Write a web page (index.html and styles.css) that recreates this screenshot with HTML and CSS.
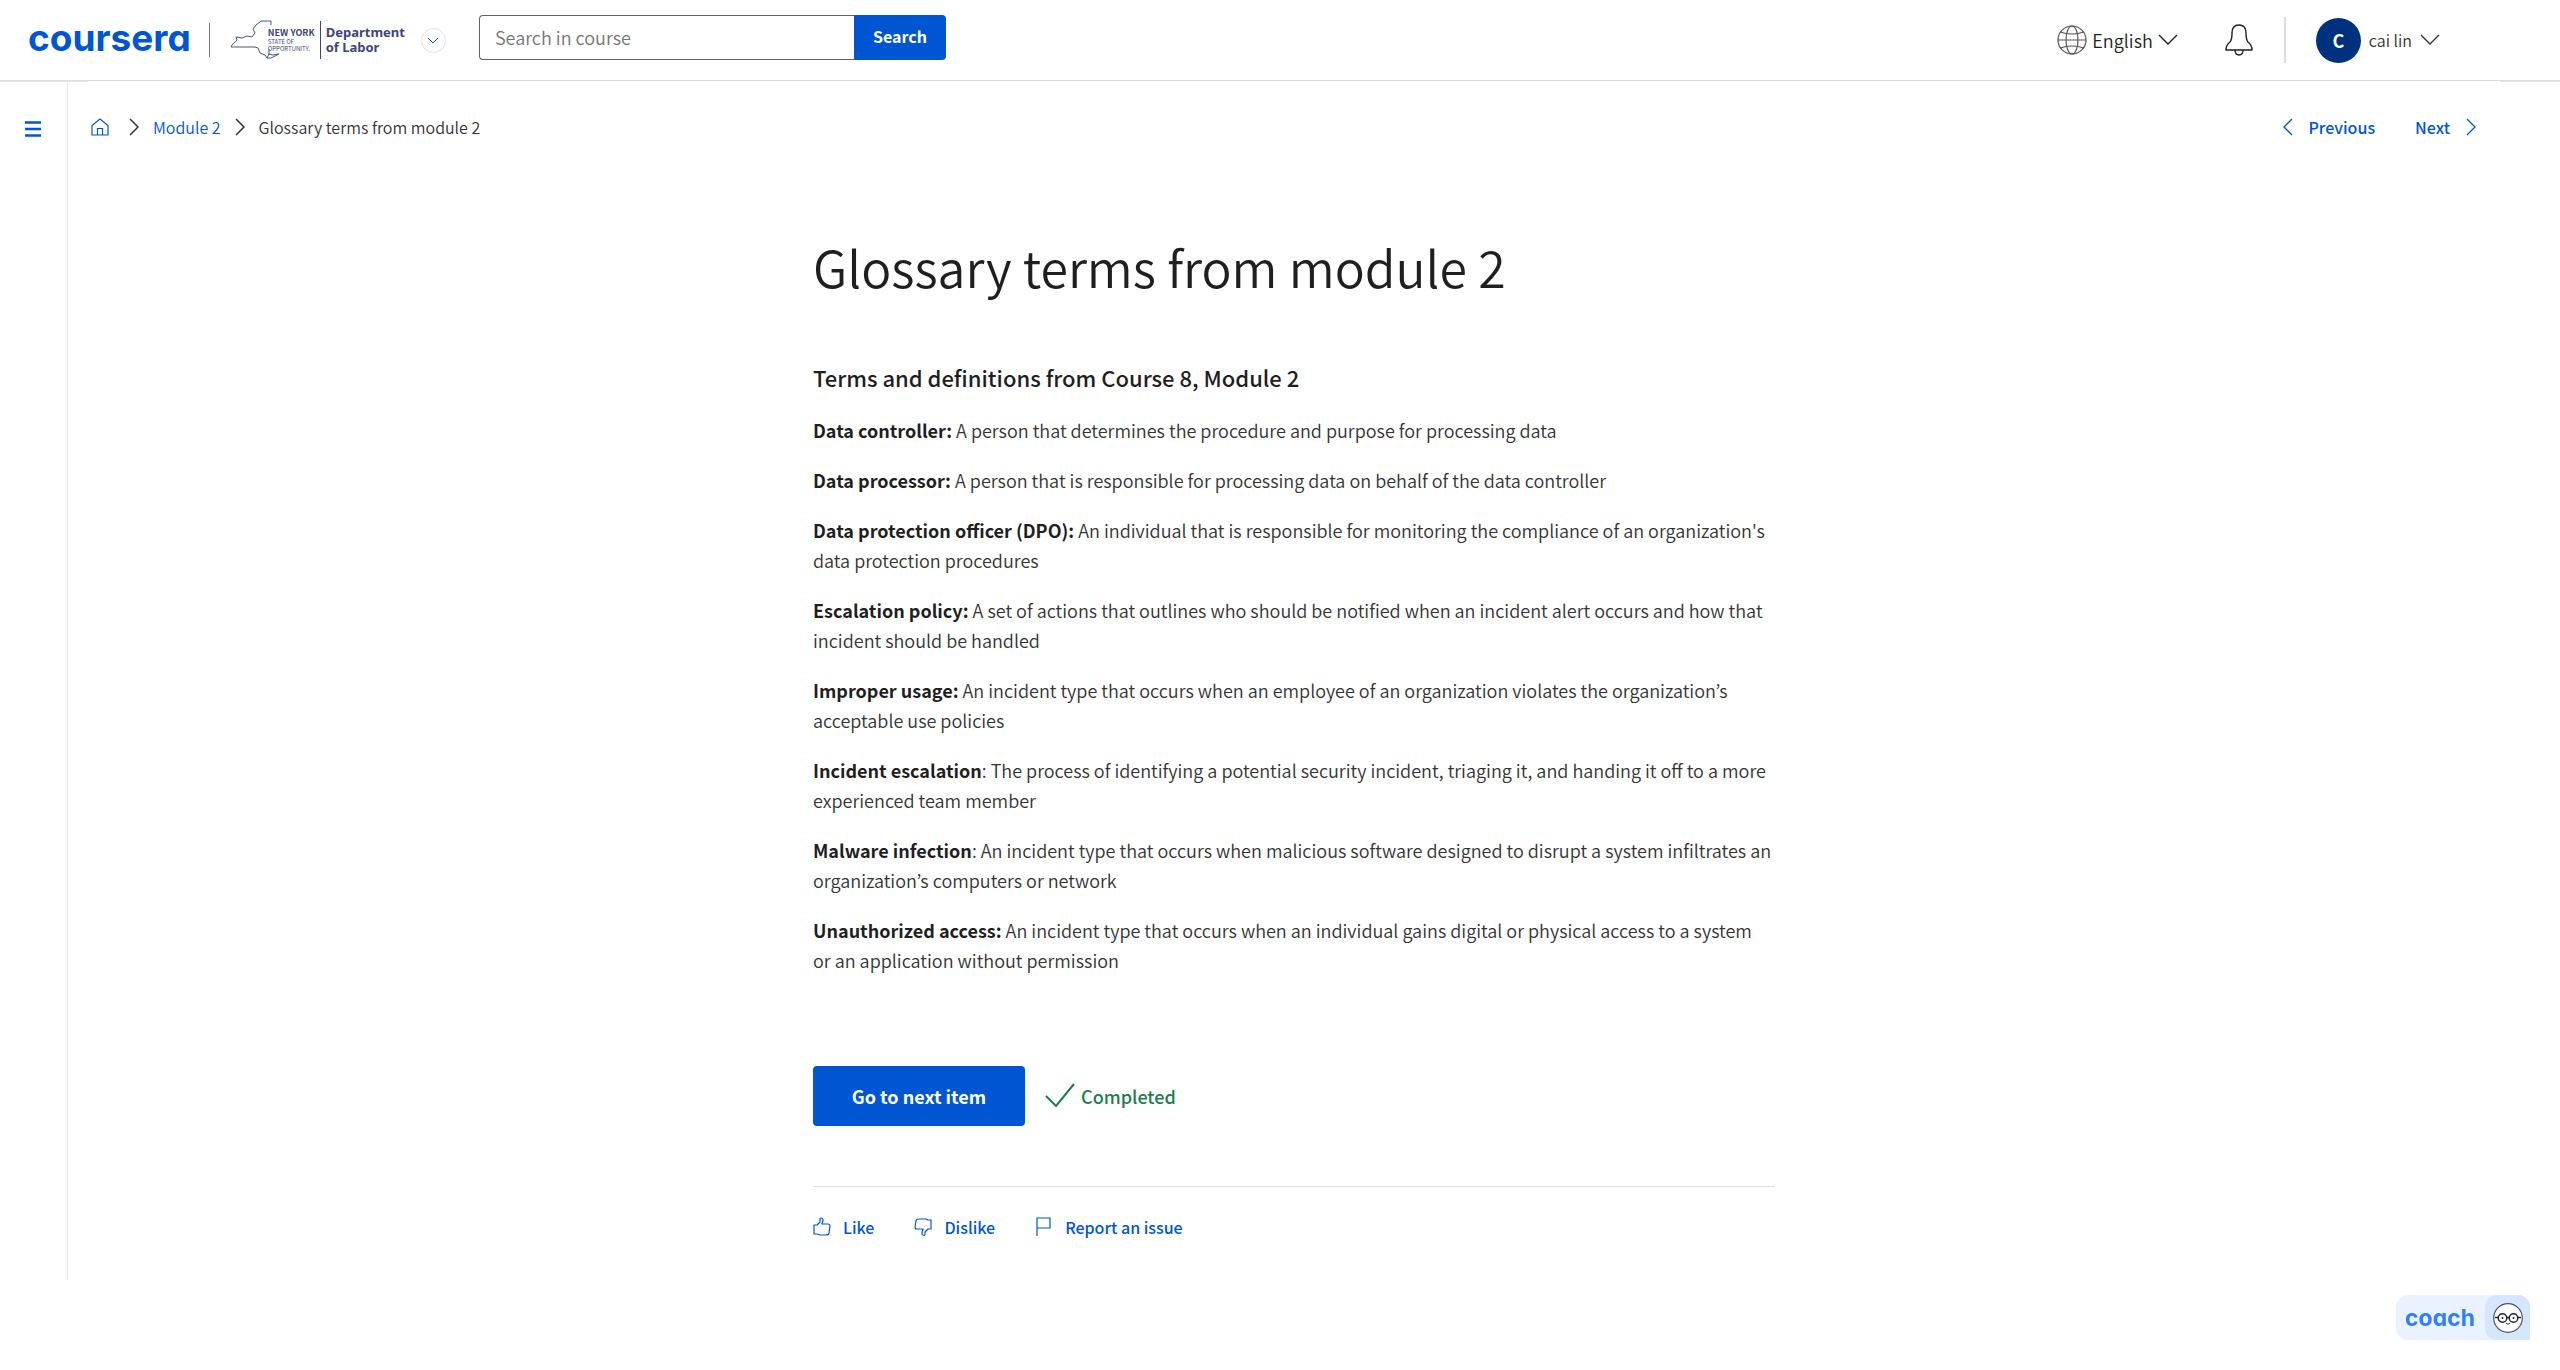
FILE: index.html
```html
<!DOCTYPE html>
<html lang="en">
<head>
<meta charset="utf-8">
<meta name="viewport" content="width=device-width, initial-scale=1">
<title>Glossary terms from module 2 | Coursera</title>
<link rel="stylesheet" href="styles.css">
</head>
<body>
<header class="topbar">
  <a class="wordmark" href="#">coursera</a>
  <span class="brand-divider"></span>
  <a class="partner" href="#">
    <svg class="partner-map" width="46" height="40" viewBox="0 0 46 40" fill="none" stroke="#4a5680" stroke-width="1">
      <path d="M41 5V1H31L26 5L23 9L25 13L22 17L17 16L12 18L6 17L7 20L2 25L1 27H25L28 28L30 33L35 35L37 38M39 29V34L37 38L41 38L49 34L43 35L38 34"/>
    </svg>
    <span class="partner-state"><b>NEW YORK</b><span>STATE OF</span><span>OPPORTUNITY.</span></span>
    <span class="partner-name">Department<br>of Labor</span>
  </a>
  <button class="partner-toggle" type="button" aria-label="Switch program">
    <svg width="12" height="7" viewBox="0 0 12 7" fill="none" stroke="currentColor"><path d="M1 1L6 6L11 1"/></svg>
  </button>
  <form class="search">
    <input class="search-input" type="text" placeholder="Search in course" aria-label="Search in course">
    <button class="search-button" type="button">Search</button>
  </form>
  <nav class="tools" aria-label="Account">
    <button class="tool language" type="button">
      <svg width="30" height="30" viewBox="0 0 30 30" fill="none" stroke="#555" stroke-width="1.2">
        <circle cx="15" cy="15" r="14"/><ellipse cx="15" cy="15" rx="6" ry="14"/><path d="M1 15H29M3 7Q15 11 27 7M3 23Q15 19 27 23"/>
      </svg>
      <span>English</span>
      <svg width="20" height="12" viewBox="0 0 20 12" fill="none" stroke="currentColor" stroke-width="1.4"><path d="M1 1L10 10L19 1"/></svg>
    </button>
    <button class="tool" type="button" aria-label="Notifications">
      <svg width="30" height="32" viewBox="0 0 30 32" fill="none" stroke="currentColor" stroke-width="1.4" stroke-linejoin="round">
        <path d="M8 9Q8 1 15 1Q22 1 22 9Q22 16 24 18Q28 21 28 26H2Q2 21 6 18Q8 16 8 9ZM11 26Q11 31 15 31Q19 31 19 26"/>
      </svg>
    </button>
    <span class="tools-divider"></span>
    <button class="tool account" type="button">
      <span class="avatar">C</span>
      <span>cai lin</span>
      <svg width="20" height="12" viewBox="0 0 20 12" fill="none" stroke="currentColor" stroke-width="1.4"><path d="M1 1L10 10L19 1"/></svg>
    </button>
  </nav>
</header>

<div class="page">
  <aside class="rail">
    <button class="menu" type="button" aria-label="Show menu">
      <svg width="16" height="16" viewBox="0 0 16 16" stroke="currentColor" stroke-width="2.500"><path d="M0 1.500H16M0 8H16M0 14.500H16"/></svg>
    </button>
  </aside>
  <main class="main">
    <div class="pathbar">
      <nav class="crumbs" aria-label="Breadcrumb">
        <a class="home" href="#" aria-label="Home">
          <svg width="18" height="18" viewBox="0 0 18 18" fill="none" stroke="currentColor" stroke-width="1.2"><path d="M1 7.500V17H17V7.500L9 1ZM6.500 17V10.500H11.500V17"/></svg>
        </a>
        <svg width="10" height="18" viewBox="0 0 10 18" fill="none" stroke="currentColor" stroke-width="1.500"><path d="M1 1L9 9L1 17"/></svg>
        <a href="#">Module 2</a>
        <svg width="10" height="18" viewBox="0 0 10 18" fill="none" stroke="currentColor" stroke-width="1.500"><path d="M1 1L9 9L1 17"/></svg>
        <span>Glossary terms from module 2</span>
      </nav>
      <nav class="pager" aria-label="Items">
        <a href="#"><svg width="10" height="18" viewBox="0 0 10 18" fill="none" stroke="currentColor" stroke-width="1.300"><path d="M9 1L1 9L9 17"/></svg>Previous</a>
        <a href="#">Next<svg width="10" height="18" viewBox="0 0 10 18" fill="none" stroke="currentColor" stroke-width="1.300"><path d="M1 1L9 9L1 17"/></svg></a>
      </nav>
    </div>
    <article class="reading">
      <h1>Glossary terms from module 2</h1>
      <h2>Terms and definitions from Course 8, Module 2</h2>
      <p><strong>Data controller:</strong> A person that determines the procedure and purpose for processing data</p>
      <p><strong>Data processor:</strong> A person that is responsible for processing data on behalf of the data controller</p>
      <p><strong>Data protection officer (DPO):</strong> An individual that is responsible for monitoring the compliance of an organization's data protection procedures</p>
      <p><strong>Escalation policy:</strong> A set of actions that outlines who should be notified when an incident alert occurs and how that incident should be handled</p>
      <p><strong>Improper usage:</strong> An incident type that occurs when an employee of an organization violates the organization’s acceptable use policies</p>
      <p><strong>Incident escalation</strong>: The process of identifying a potential security incident, triaging it, and handing it off to a more experienced team member</p>
      <p><strong>Malware infection</strong>: An incident type that occurs when malicious software designed to disrupt a system infiltrates an organization’s computers or network</p>
      <p><strong>Unauthorized access:</strong> An incident type that occurs when an individual gains digital or physical access to a system or an application without permission</p>
      <div class="progress">
        <button class="next-item" type="button">Go to next item</button>
        <span class="completed">
          <svg width="30" height="26" viewBox="0 0 30 26" fill="none" stroke="currentColor" stroke-width="2"><path d="M1 13L11 23L29 1"/></svg>
          Completed
        </span>
      </div>
      <div class="feedback">
        <button type="button"><svg width="18" height="20" viewBox="0 0 18 20" fill="none" stroke="currentColor" stroke-width="1.200" stroke-linejoin="round"><path d="M1 8H4L7 5V2Q7 1 8 1Q10 1 10 3L9 7H15Q17 7 17 9L16 16Q16 18 13 18H7L4 17H1Z"/></svg>Like</button>
        <button type="button"><svg width="18" height="20" viewBox="0 0 18 20" fill="none" stroke="currentColor" stroke-width="1.200" stroke-linejoin="round"><path d="M17 12H14L11 15V17Q11 19 9 18Q8 18 8 16L9 12H3Q1 12 1 10L2 4Q2 2 5 2H12L14 3H17Z"/></svg>Dislike</button>
        <button type="button"><svg width="18" height="20" viewBox="0 0 18 20" fill="none" stroke="currentColor" stroke-width="1.200"><path d="M2 19V1H15V11H2"/></svg>Report an issue</button>
      </div>
    </article>
  </main>
</div>

<button class="coach" type="button">
  <span class="coach-label">coach</span>
  <span class="coach-face">
    <svg width="30" height="30" viewBox="0 0 30 30" fill="none" stroke="#1f2433">
      <circle cx="15" cy="15" r="14.300" fill="#fff" stroke="#4a5266" stroke-width="1.200"/>
      <circle cx="9.500" cy="15" r="4.300" stroke-width="1.400"/><circle cx="20.500" cy="15" r="4.300" stroke-width="1.400"/>
      <path d="M2 14.500H5M25 14.500H28M13.500 14.500H16.500" stroke-width="1.500"/><path d="M13 20Q15 22.500 17 20"/>
      <circle cx="9.500" cy="15" r="1" fill="#1f2433" stroke="none"/><circle cx="20.500" cy="15" r="1" fill="#1f2433" stroke="none"/>
    </svg>
  </span>
</button>
</body>
</html>
```
FILE: styles.css
```css
* { box-sizing: border-box; }

body {
  margin: 0;
  background: #fff;
  color: #1f1f1f;
  font-family: "Noto Sans CJK KR", "Noto Sans", sans-serif;
  font-size: 18px;
  font-weight: 350;
  line-height: 30px;
}

a { color: #0056d2; text-decoration: none; }

button {
  padding: 0;
  border: 0;
  background: none;
  color: inherit;
  font: inherit;
  cursor: pointer;
}

svg { display: block; flex: none; overflow: visible; }

/* Top bar */
.topbar {
  display: flex;
  align-items: center;
  height: 81px;
  padding: 0 120px 0 28px;
  border-bottom: 1px solid #dcdcdc;
}

.wordmark {
  font-family: Inter, "Open Sans", sans-serif;
  font-feature-settings: "cv11";
  font-size: 37px;
  font-weight: 700;
  line-height: 40px;
  padding-bottom: 4px;
}

.brand-divider { width: 1px; height: 34px; margin: 0 20px 0 18px; background: #777; }

.partner { display: flex; align-items: center; color: #3b4779; }
.partner-map { margin-right: -8px; }
.partner-state {
  display: flex;
  flex-direction: column;
  padding-right: 5px;
  font-size: 6px;
  font-weight: 400;
  line-height: 7px;
}
.partner-state b { font-size: 9px; line-height: 10px; }
.partner-name {
  padding: 4px 0 4px 5px;
  border-left: 1px solid #3b4779;
  font-family: "Noto Sans", sans-serif;
  font-size: 13px;
  font-weight: 700;
  line-height: 15px;
}

.partner-toggle {
  display: grid;
  place-items: center;
  width: 25px;
  height: 25px;
  margin-left: 16px;
  border: 1px solid #e1e1e1;
  border-radius: 50%;
  color: #0056d2;
}

.search { display: flex; margin: 0 0 6px 33px; }
.search-input {
  width: 375px;
  height: 45px;
  padding: 0 15px;
  border: 1px solid #636363;
  border-right: 0;
  border-radius: 4px 0 0 4px;
  color: #1f1f1f;
  font: inherit;
}
.search-input::placeholder { color: #757575; opacity: 1; }
.search-button {
  width: 92px;
  height: 45px;
  padding-bottom: 2px;
  border-radius: 0 4px 4px 0;
  background: #0056d2;
  color: #fff;
  font-size: 16px;
  font-weight: 700;
}

.tools { display: flex; align-items: center; margin-left: auto; }
.tool { display: flex; align-items: center; color: #1f1f1f; }
.language { gap: 5px; margin-right: 46px; }
.tools-divider { width: 2px; height: 46px; margin: 0 30px; background: #dcdcdc; }
.account { gap: 8px; color: #333; font-size: 16px; }
.avatar {
  width: 45px;
  height: 45px;
  border-radius: 50%;
  background: #00317f;
  color: #fff;
  font-size: 18px;
  font-weight: 700;
  line-height: 45px;
  text-align: center;
}

/* Page frame */
.page {
  display: flex;
  background:
    linear-gradient(#e5e5e5, #e5e5e5) left top / 88px 1px no-repeat,
    linear-gradient(#e5e5e5, #e5e5e5) right top / 60px 1px no-repeat;
}
.rail {
  flex: none;
  width: 68px;
  padding: 40px 0 0 25px;
  border-right: 1px solid #e5e5e5;
}
.menu { display: block; color: #0056d2; }

.main { flex: 1; min-width: 0; margin-right: 40px; padding: 31px 0 38px; }

.pathbar {
  display: flex;
  align-items: center;
  justify-content: space-between;
  padding: 0 44px 0 23px;
  font-size: 16px;
}
.crumbs { display: flex; align-items: center; gap: 14px; color: #333; }
.home { margin-right: 6px; }
.pager { display: flex; gap: 40px; font-weight: 500; }
.pager a { display: flex; align-items: center; gap: 16px; }

/* Reading */
.reading { width: 100%; max-width: 962px; margin: 89px auto 0; }
.reading h1 { margin: 0 0 58px; font-size: 50px; font-weight: 350; line-height: 70px; }
.reading h2 { margin: 0 0 20px; font-size: 22px; font-weight: 500; line-height: 36px; }
.reading p { max-width: 960px; margin: 0 0 20px; color: #333; }
.reading strong { color: #1f1f1f; font-weight: 700; }

.progress {
  display: flex;
  align-items: center;
  gap: 20px;
  margin-top: 91px;
  padding-bottom: 60px;
  border-bottom: 1px solid #dcdcdc;
}
.next-item {
  width: 212px;
  height: 60px;
  border-radius: 4px;
  background: #0056d2;
  color: #fff;
  font-weight: 700;
}
.completed {
  display: flex;
  align-items: center;
  gap: 6px;
  color: #1d7c50;
  font-weight: 500;
}

.feedback { display: flex; gap: 40px; margin-top: 25px; }
.feedback button {
  display: flex;
  align-items: center;
  gap: 12px;
  color: #0056d2;
  font-size: 16px;
  font-weight: 500;
}

/* Coach widget floats over the page */
.coach {
  position: fixed;
  right: 30px;
  bottom: 30px;
  display: flex;
  height: 45px;
  border-radius: 12px 12px 2px 12px;
  background: #eaf2ff;
  overflow: hidden;
}
.coach-label {
  padding: 0 10px 0 9px;
  color: #2f80ff;
  font-family: Inter, "Open Sans", sans-serif;
  font-feature-settings: "cv11";
  font-size: 23px;
  font-weight: 700;
  line-height: 46px;
}
.coach-face {
  display: grid;
  place-items: center;
  width: 45px;
  height: 45px;
  border-radius: 12px 0 0 12px;
  background: #d6e6ff;
}
```
